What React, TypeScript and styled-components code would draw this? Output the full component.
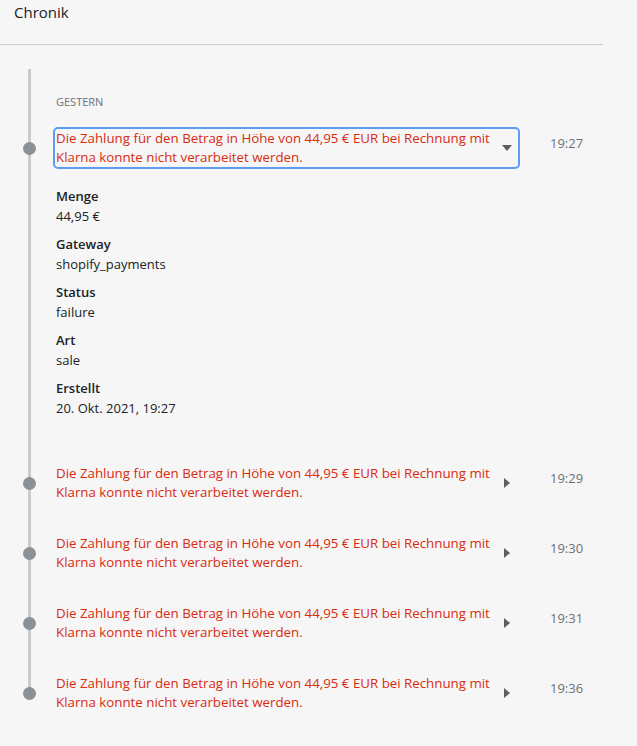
import React, { useState } from 'react';
import styled, { createGlobalStyle } from 'styled-components';

const GlobalStyle = createGlobalStyle`
  html, body {
    margin: 0;
    padding: 0;
    background: #f6f6f7;
  }
  body {
    font-family: 'Open Sans', 'Noto Sans', sans-serif;
    color: #212b36;
  }
`;

type Detail = { label: string; value: string };

type Event = {
  time: string;
  message: string;
  details?: Detail[];
};

const MESSAGE =
  'Die Zahlung für den Betrag in Höhe von 44,95 € EUR bei Rechnung mit Klarna konnte nicht verarbeitet werden.';

const events: Event[] = [
  {
    time: '19:27',
    message: MESSAGE,
    details: [
      { label: 'Menge', value: '44,95 €' },
      { label: 'Gateway', value: 'shopify_payments' },
      { label: 'Status', value: 'failure' },
      { label: 'Art', value: 'sale' },
      { label: 'Erstellt', value: '20. Okt. 2021, 19:27' },
    ],
  },
  { time: '19:29', message: MESSAGE },
  { time: '19:30', message: MESSAGE },
  { time: '19:31', message: MESSAGE },
  { time: '19:36', message: MESSAGE },
];

function Caret({ open }: { open: boolean }) {
  return open ? (
    <svg width="10" height="6" viewBox="0 0 10 6">
      <path d="M0 0h10L5 6z" fill="#5c5f62" />
    </svg>
  ) : (
    <svg width="6" height="10" viewBox="0 0 6 10">
      <path d="M0 0v10l6-5z" fill="#5c5f62" />
    </svg>
  );
}

export default function App() {
  const [openIndex, setOpenIndex] = useState<number | null>(0);

  return (
    <Page>
      <GlobalStyle />
      <Header>
        <Title>Chronik</Title>
      </Header>
      <Timeline>
        <DayLabel>Gestern</DayLabel>
        <EventList>
          {events.map((event, i) => {
            const open = openIndex === i;
            return (
              <EventItem key={event.time}>
                <EventRow>
                  <Dot />
                  <MessageButton
                    type="button"
                    $focused={open}
                    onClick={() => setOpenIndex(open ? null : i)}
                  >
                    <MessageText>{event.message}</MessageText>
                    <CaretWrap>
                      <Caret open={open} />
                    </CaretWrap>
                  </MessageButton>
                  <Time>{event.time}</Time>
                </EventRow>
                {open && event.details ? (
                  <DetailList>
                    {event.details.map((d) => (
                      <DetailGroup key={d.label}>
                        <DetailLabel>{d.label}</DetailLabel>
                        <DetailValue>{d.value}</DetailValue>
                      </DetailGroup>
                    ))}
                  </DetailList>
                ) : null}
              </EventItem>
            );
          })}
        </EventList>
      </Timeline>
    </Page>
  );
}

const Page = styled.div`
  width: 603px;
  min-height: 746px;
`;

const Header = styled.header`
  height: 44px;
  padding: 0 14px;
  border-bottom: 1px solid #cbcccd;
  display: flex;
  align-items: flex-start;
`;

const Title = styled.h2`
  margin: 2px 0 0;
  font-size: 15px;
  font-weight: 400;
  line-height: 20px;
  color: #202223;
`;

const Timeline = styled.section`
  position: relative;
  margin: 24px 0 0 28px;
  padding: 25px 0 36px;

  &::before {
    content: '';
    position: absolute;
    left: 0;
    top: 0;
    bottom: 62px;
    width: 3px;
    background: #c9cccf;
  }
`;

const DayLabel = styled.div`
  margin-left: 28px;
  font-size: 11px;
  line-height: 16px;
  text-transform: uppercase;
  color: #6d7175;
`;

const EventList = styled.ol`
  list-style: none;
  margin: 17px 0 0;
  padding: 0;
  display: flex;
  flex-direction: column;
  gap: 28px;
`;

const EventItem = styled.li`
  display: flex;
  flex-direction: column;
`;

const EventRow = styled.div`
  position: relative;
  display: flex;
  align-items: flex-start;
`;

const Dot = styled.span`
  position: absolute;
  left: -5px;
  top: 50%;
  width: 13px;
  height: 13px;
  margin-top: -6px;
  border-radius: 50%;
  background: #8c9196;
`;

const MessageButton = styled.button<{ $focused: boolean }>`
  margin-left: 25px;
  width: 467px;
  display: flex;
  align-items: center;
  justify-content: space-between;
  padding: 0 6px 0 1px;
  background: transparent;
  border: 2px solid ${(p) => (p.$focused ? '#5c9cf2' : 'transparent')};
  border-radius: 5px;
  text-align: left;
  cursor: pointer;
  font: inherit;
`;

const MessageText = styled.span`
  width: 444px;
  font-size: 13.3px;
  line-height: 19px;
  color: #d82c0d;
`;

const CaretWrap = styled.span`
  display: flex;
  align-items: center;
  justify-content: center;
  width: 10px;
  height: 10px;
`;

const Time = styled.span`
  margin: 7px 0 0 30px;
  font-size: 13px;
  line-height: 19px;
  color: #6d7175;
`;

const DetailList = styled.dl`
  margin: 18px 0 16px 28px;
  display: flex;
  flex-direction: column;
  gap: 9px;
`;

const DetailGroup = styled.div`
  display: flex;
  flex-direction: column;
`;

const DetailLabel = styled.dt`
  font-size: 13px;
  line-height: 19px;
  font-weight: 600;
  color: #202223;
`;

const DetailValue = styled.dd`
  margin: 0;
  font-size: 13px;
  line-height: 20px;
  color: #202223;
`;
